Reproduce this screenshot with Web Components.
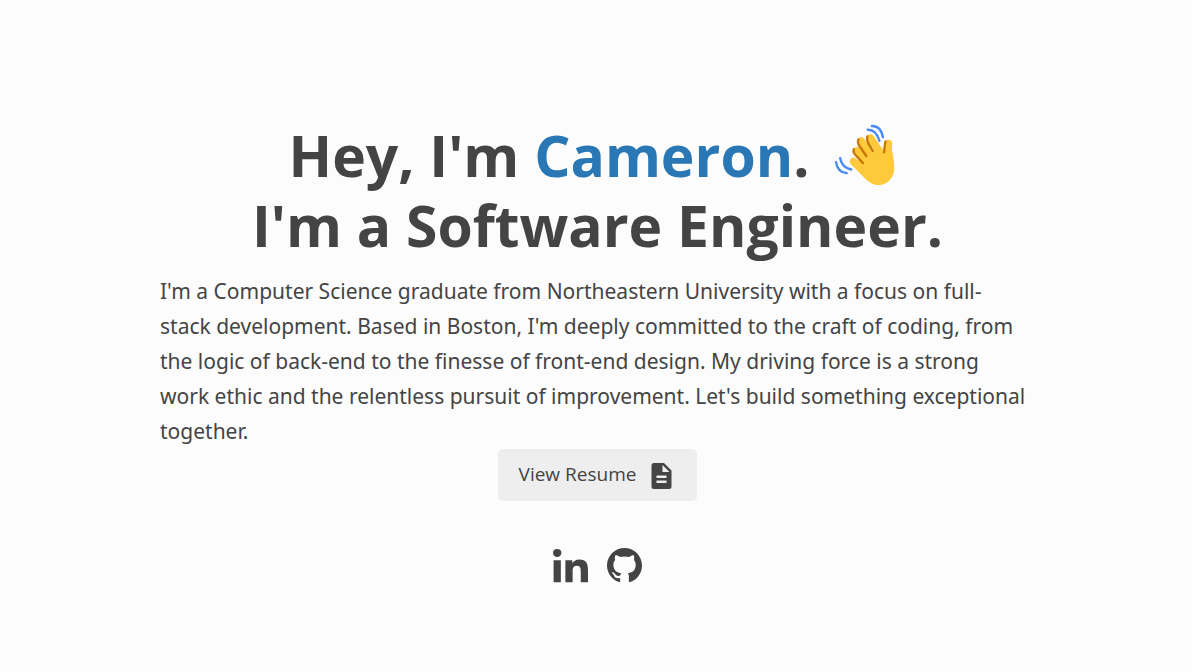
<!DOCTYPE html>
<html lang="en">
<head>
<meta charset="utf-8">
<title>Cameron - Software Engineer</title>
<style>
body { margin: 0; background: #fcfcfc; color: #444; font-family: "Segoe UI", "Open Sans", "Noto Sans", sans-serif; }
</style>
</head>
<body>
<hero-section>
  <hero-title slot="title" name="Cameron" role-name="Software Engineer"></hero-title>
  <hero-bio slot="bio">I'm a Computer Science graduate from Northeastern University with a focus on full-<br>stack development. Based in Boston, I'm deeply committed to the craft of coding, from<br>the logic of back-end to the finesse of front-end design. My driving force is a strong<br>work ethic and the relentless pursuit of improvement. Let's build something exceptional<br>together.</hero-bio>
  <resume-button slot="action">View Resume</resume-button>
  <social-links slot="social"></social-links>
</hero-section>
<script>
const define = (tag, html, setup) => customElements.define(tag, class extends HTMLElement {
  constructor() {
    super();
    this.attachShadow({ mode: "open" }).innerHTML = html;
  }
  connectedCallback() { if (setup) setup(this, this.shadowRoot); }
});

define("hero-section", `
<style>
:host { display: block; }
main { display: flex; flex-direction: column; align-items: center; box-sizing: border-box; min-height: 100vh; max-width: 1192px; margin: 0 auto; padding: 120px 157px 40px 160px; }
</style>
<main><slot name="title"></slot><slot name="bio"></slot><slot name="action"></slot><slot name="social"></slot></main>`);

define("hero-title", `
<style>
:host { display: block; }
h1 { margin: 0; font-size: 57px; line-height: 70px; font-weight: 700; text-align: center; white-space: nowrap; }
.first { display: flex; justify-content: center; align-items: center; gap: 25px; padding-right: 10px; }
.second { display: block; }
.name { color: #2977b5; }
svg { width: 62px; height: 62px; }
</style>
<h1><span class="first"><span>Hey, I'm <span class="name"></span>.</span>
<svg viewBox="44 28 184 184" aria-hidden="true">
  <g fill="none" stroke="#ffc93c" stroke-width="22" stroke-linecap="round">
    <path d="M102 139L142 178M112 107L150 152M125 78L160 130M152 69L188 122"/>
    <path d="M205 87L203 125" stroke-width="24"/>
  </g>
  <path fill="#ffc93c" d="M123 132L147 115L165 105L178 106L191 119L200 99L217 108C218 124 224 140 223 160C222 188 202 209 177 209C159 209 147 200 135 188L94 147Z"/>
  <g fill="none" stroke="#c87800" stroke-width="7" stroke-linecap="round">
    <path d="M103 103Q99 111 108 120L130 144M117 74Q112 82 120 94L140 123M143 65Q140 73 147 87L159 108M197 80Q194 90 193 112"/>
  </g>
  <g fill="none" stroke="#4a8bf0" stroke-width="7" stroke-linecap="round">
    <path d="M144 45Q169 44 179 78M156 34Q183 33 189 67M62 129Q68 158 95 163M50 141Q54 171 82 174"/>
  </g>
</svg></span><span class="second">I'm a <span class="role"></span>.</span></h1>`, (el, root) => {
  root.querySelector(".name").textContent = el.getAttribute("name");
  root.querySelector(".role").textContent = el.getAttribute("role-name");
});

define("hero-bio", `
<style>
:host { display: block; align-self: stretch; margin-top: 14px; }
p { margin: 0; font-family: "Segoe UI", "Noto Sans", sans-serif; font-size: 21px; line-height: 35px; white-space: nowrap; }
</style>
<p><slot></slot></p>`);

define("resume-button", `
<style>
:host { display: block; }
button { display: flex; align-items: center; gap: 15px; height: 52px; margin: 0; padding: 0 25px 2px 21px; border: 0; border-radius: 5px; background: #eee; color: #444; font: inherit; font-size: 19px; cursor: pointer; }
svg { width: 21px; height: 26px; margin-top: 4px; }
</style>
<button type="button"><span><slot></slot></span>
<svg viewBox="0 0 20 26" aria-hidden="true"><path fill="#444" fill-rule="evenodd" d="M2.5 0H12.5L20 7.5V23.500Q20 26 17.500 26H2.500Q0 26 0 23.500V2.500Q0 0 2.500 0ZM11 2V9H18ZM5 12.500V15H15V12.500ZM5 17.500V20H15V17.500Z"/></svg></button>`);

define("social-links", `
<style>
:host { display: block; margin-top: 47px; }
nav { display: flex; gap: 19px; }
a { display: block; color: #444; }
svg { display: block; width: 35px; height: 35px; fill: currentColor; }
</style>
<nav aria-label="Social profiles">
<a href="#linkedin" aria-label="LinkedIn"><svg viewBox="0 -14 448 448" preserveAspectRatio="none"><path transform="scale(1 .95)" d="M100.280 448H7.400V148.900h92.880zM53.790 108.100C24.090 108.100 0 83.500 0 53.800a53.790 53.790 0 0 1 107.580 0c0 29.700-24.100 54.300-53.790 54.300zM447.900 448h-92.680V302.400c0-34.700-.7-79.200-48.290-79.200-48.290 0-55.690 37.700-55.690 76.700V448h-92.780V148.900h89.080v40.800h1.300c12.400-23.500 42.690-48.300 87.880-48.300 94 0 111.280 61.900 111.280 142.300V448z"/></svg></a>
<a href="#github" aria-label="GitHub"><svg viewBox="0 0 16 16"><path d="M8 0C3.580 0 0 3.580 0 8c0 3.540 2.290 6.530 5.470 7.590.4.07.55-.17.55-.38 0-.19-.01-.82-.01-1.490-2.010.37-2.530-.49-2.690-.94-.09-.23-.48-.94-.82-1.130-.28-.15-.68-.52-.01-.53.63-.01 1.080.58 1.230.82.72 1.210 1.870.87 2.330.66.07-.52.28-.87.51-1.070-1.780-.2-3.640-.89-3.640-3.950 0-.87.31-1.590.82-2.150-.08-.2-.36-1.020.08-2.120 0 0 .67-.21 2.200.82.64-.18 1.320-.27 2-.27.68 0 1.360.09 2 .27 1.530-1.040 2.200-.82 2.200-.82.44 1.100.16 1.920.08 2.120.51.56.82 1.270.82 2.150 0 3.070-1.870 3.750-3.650 3.950.29.25.54.73.54 1.480 0 1.070-.01 1.930-.01 2.200 0 .21.15.46.55.38A8.013 8.013 0 0 0 16 8c0-4.420-3.580-8-8-8z"/></svg></a>
</nav>`);
</script>
</body>
</html>
